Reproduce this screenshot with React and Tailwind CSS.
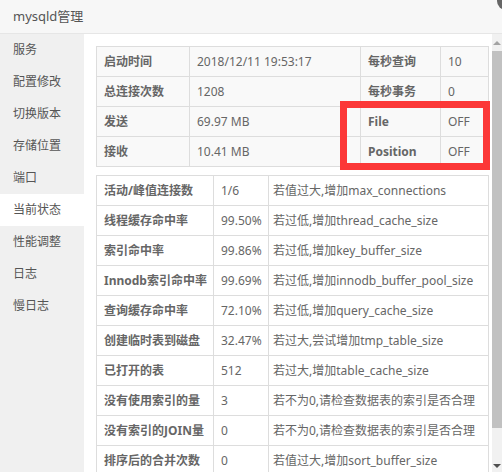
import React from "react";

const font = { fontFamily: '"Noto Sans", "Noto Sans CJK SC", sans-serif' };

const menu = ["服务", "配置修改", "切换版本", "存储位置", "端口", "当前状态", "性能调整", "日志", "慢日志"];

const top = [
  ["启动时间", "2018/12/11 19:53:17", "每秒查询", "10"],
  ["总连接次数", "1208", "每秒事务", "0"],
  ["发送", "69.97 MB", "File", "OFF"],
  ["接收", "10.41 MB", "Position", "OFF"],
];

const stats = [
  ["活动/峰值连接数", "1/6", "若值过大,增加max_connections"],
  ["线程缓存命中率", "99.50%", "若过低,增加thread_cache_size"],
  ["索引命中率", "99.86%", "若过低,增加key_buffer_size"],
  ["Innodb索引命中率", "99.69%", "若过低,增加innodb_buffer_pool_size"],
  ["查询缓存命中率", "72.10%", "若过低,增加query_cache_size"],
  ["创建临时表到磁盘", "32.47%", "若过大,尝试增加tmp_table_size"],
  ["已打开的表", "512", "若过大,增加table_cache_size"],
  ["没有使用索引的量", "3", "若不为0,请检查数据表的索引是否合理"],
  ["没有索引的JOIN量", "0", "若不为0,请检查数据表的索引是否合理"],
  ["排序后的合并次数", "0", "若值过大,增加sort_buffer_size"],
];

export default function App() {
  return (
    <div style={font} className="relative w-[502px] h-[472px] overflow-hidden bg-white text-[12px] text-[#666]">
      <div className="h-[34px] bg-[#f7f7f7] border-b border-[#e6e6e6] flex items-center pl-[13px] text-[13px] text-[#555]">
        mysqld管理
      </div>
      <div className="absolute left-[497px] top-[-8px] w-[18px] h-[18px] rounded-full bg-[#666]" />
      <div className="flex h-[438px]">
        <div className="w-[84px] shrink-0 bg-[#f0f0f0] flex flex-col">
          {menu.map((m) => (
            <div
              key={m}
              className={`h-[32px] flex items-center pl-[13px] text-[12px] text-[#555] ${m === "当前状态" ? "bg-white" : ""}`}
            >
              {m}
            </div>
          ))}
        </div>
        <div className="relative flex-1 overflow-hidden pl-[12px] pt-[12px]">
          <table className="w-[392px] border-collapse table-fixed bg-[#f9f9f9]">
            <colgroup>
              <col className="w-[93px]" />
              <col className="w-[171px]" />
              <col className="w-[80px]" />
              <col className="w-[48px]" />
            </colgroup>
            <tbody>
              {top.map((r) => (
                <tr key={r[0]} className="h-[30px]">
                  <td className="border border-[#ddd] pl-[7px] font-bold text-[#666] whitespace-nowrap">{r[0]}</td>
                  <td className="border border-[#ddd] pl-[7px] whitespace-nowrap">{r[1]}</td>
                  <td className="border border-[#ddd] pl-[7px] font-bold text-[#666] whitespace-nowrap">{r[2]}</td>
                  <td className="border border-[#ddd] pl-[7px] whitespace-nowrap">{r[3]}</td>
                </tr>
              ))}
            </tbody>
          </table>
          <table className="mt-[8px] w-[392px] border-collapse table-fixed bg-white">
            <colgroup>
              <col className="w-[117px]" />
              <col className="w-[55px]" />
              <col className="w-[220px]" />
            </colgroup>
            <tbody>
              {stats.map((r) => (
                <tr key={r[0]} className="h-[30px]">
                  <td className="border border-[#ddd] pl-[7px] font-bold text-[#666] whitespace-nowrap">{r[0]}</td>
                  <td className="border border-[#ddd] pl-[7px] whitespace-nowrap">{r[1]}</td>
                  <td className="border border-[#ddd] pl-[4px] whitespace-nowrap">{r[2]}</td>
                </tr>
              ))}
            </tbody>
          </table>
          <div className="absolute left-[256px] top-[67px] w-[150px] h-[69px] border-[7px] border-[#fc3838]" />
        </div>
        <div className="w-[10px] shrink-0 bg-[#f1f1f1] flex flex-col items-center">
          <div className="h-[17px] flex items-center justify-center">
            <div className="w-0 h-0 border-l-[4px] border-r-[4px] border-b-[4px] border-l-transparent border-r-transparent border-b-[#a3a3a3]" />
          </div>
          <div className="w-[10px] h-[377px] bg-[#c1c1c1]" />
          <div className="flex-1 flex items-end justify-center pb-[4px]">
            <div className="w-0 h-0 border-l-[4px] border-r-[4px] border-t-[4px] border-l-transparent border-r-transparent border-t-[#505050]" />
          </div>
        </div>
      </div>
    </div>
  );
}
